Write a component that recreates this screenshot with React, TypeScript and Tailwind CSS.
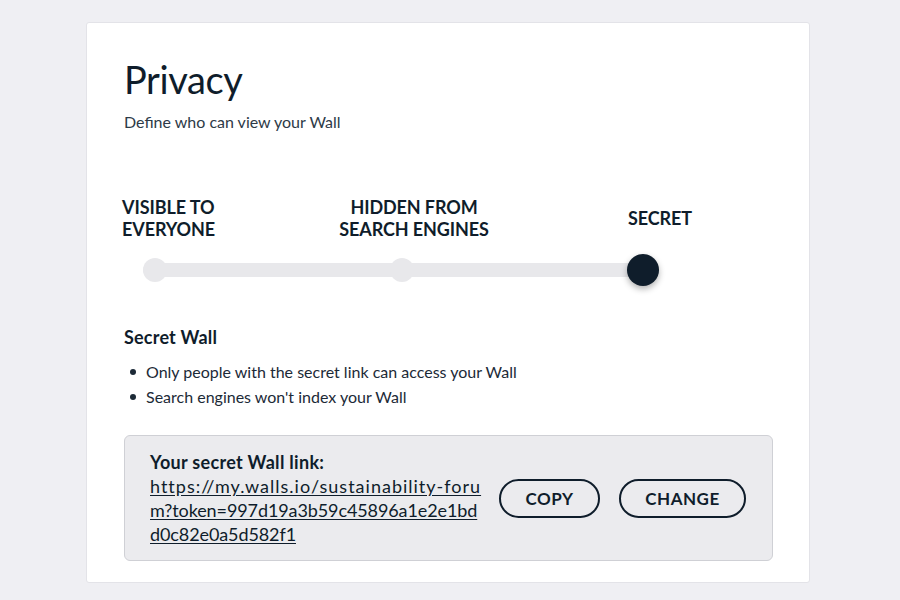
export default function App() {
  return (
    <div className="min-h-screen bg-[#efeff3] pt-[22px] pl-[86px] font-['Lato',sans-serif] text-[#0f1d2b]">
      <div className="w-[724px] h-[561px] bg-white border border-[#e3e3e8] rounded-[3px] pl-[37px] pr-[37px] pt-[34px]">
        <h1 className="text-[38px] leading-[44px] tracking-[-0.4px] font-normal">Privacy</h1>
        <p className="mt-[11px] text-[16px] leading-[20px] text-[#2d3a47]">Define who can view your Wall</p>

        <div className="mt-[62px] w-[574px]">
          <div className="flex items-center h-[48px] text-[18px] leading-[22px] font-bold uppercase tracking-[-0.1px]">
            <div className="-ml-[2px] w-[100px] shrink-0">Visible to<br />Everyone</div>
            <div className="ml-[102px] w-[180px] shrink-0 text-center">Hidden from<br />Search engines</div>
            <div className="ml-[116px] w-[80px] shrink-0 text-center">Secret</div>
          </div>
          <div className="relative mt-[12px] h-[32px] flex items-center">
            <div className="ml-[19px] w-[515px] h-[14px] rounded-full bg-[#e8e8eb]" />
            <div className="absolute left-[19px] top-[4px] w-[24px] h-[24px] rounded-full bg-[#e8e8eb]" />
            <div className="absolute left-[266px] top-[4px] w-[24px] h-[24px] rounded-full bg-[#e8e8eb]" />
            <div className="absolute left-[503px] top-0 w-[32px] h-[32px] rounded-full bg-[#0f1d2b] shadow-[0_3px_6px_rgba(0,0,0,0.3)]" />
          </div>
        </div>

        <h2 className="mt-[40px] text-[18px] leading-[22px] font-bold tracking-[0.2px]">Secret Wall</h2>
        <ul className="mt-[11px] text-[16px] leading-[25px] text-[#1c2a37]">
          <li className="flex items-center"><span className="w-[6px] h-[6px] rounded-full bg-[#1c2a37] ml-[6px] mr-[10px]" />Only people with the secret link can access your Wall</li>
          <li className="flex items-center"><span className="w-[6px] h-[6px] rounded-full bg-[#1c2a37] ml-[6px] mr-[10px]" />Search engines won't index your Wall</li>
        </ul>

        <div className="mt-[26px] w-[649px] h-[126px] bg-[#ebebee] border border-[#cfd0d5] rounded-[6px] pl-[25px] pt-[14px] flex items-start">
          <div className="w-[340px] shrink-0">
            <div className="text-[18px] leading-[24px] font-bold tracking-[0.3px]">Your secret Wall link:</div>
            <a href="#" className="block text-[18px] leading-[24px] underline underline-offset-2 whitespace-nowrap">
              <span className="block tracking-[1px]">https://my.walls.io/sustainability-foru</span>
              <span className="block tracking-[-0.1px]">m?token=997d19a3b59c45896a1e2e1bd</span>
              <span className="block tracking-[-0.1px]">d0c82e0a5d582f1</span>
            </a>
          </div>
          <button className="mt-[29px] ml-[9px] w-[101px] h-[39px] rounded-full border-2 border-[#0f1d2b] text-[17px] font-bold tracking-[0.5px]">COPY</button>
          <button className="mt-[29px] ml-[19px] w-[127px] h-[39px] rounded-full border-2 border-[#0f1d2b] text-[17px] font-bold tracking-[0.5px]">CHANGE</button>
        </div>
      </div>
    </div>
  );
}
